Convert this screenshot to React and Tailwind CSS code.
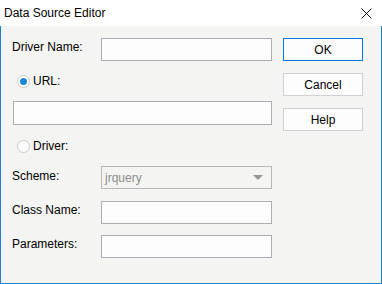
import React from 'react';

const font = { fontFamily: '"Liberation Sans", Arial, sans-serif' };

function Radio({ checked, label }) {
  return (
    <div className="flex items-center h-4 pl-[5px] gap-[3px]">
      <span className="w-[13px] h-[13px] rounded-full border border-[#c8c8c8] bg-white flex items-center justify-center">
        {checked && <span className="w-[7px] h-[7px] rounded-full bg-[#1a88d6]"></span>}
      </span>
      <span className="text-[12px] text-black">{label}</span>
    </div>
  );
}

function Field({ label, children, className = '', lift = 'mb-[6px]' }) {
  return (
    <div className={`flex items-center h-[23px] ${className}`}>
      <span className={`w-[89px] text-[12px] text-black ${lift}`}>{label}</span>
      {children}
    </div>
  );
}

const inputCls = 'w-[171px] h-[23px] border border-[#abadb3] bg-[#fcfdfc]';

function Button({ children, primary, className = '' }) {
  return (
    <button
      className={`w-[80px] h-[23px] text-[12px] text-black bg-[#fdfdfd] border ${
        primary ? 'border-[#0078d7]' : 'border-[#d0d0d0]'
      } ${className}`}
    >
      {children}
    </button>
  );
}

export default function App() {
  return (
    <div className="w-[382px] h-[284px] flex flex-col bg-white" style={font}>
      {/* Title bar */}
      <div className="h-[26px] flex items-center justify-between pl-[4px] pr-[10px] bg-white">
        <span className="text-[12px] text-black">Data Source Editor</span>
        <svg width="11" height="11" viewBox="0 0 11 11" className="mt-[1px]">
          <path d="M0.5 0.5 L10.5 10.5 M10.5 0.5 L0.5 10.5" stroke="#111" strokeWidth="1" />
        </svg>
      </div>

      {/* Body */}
      <div className="flex-1 flex bg-[#f4f4f2] border-x border-b border-[#1883d7] pt-[12px] pl-[11px]">
        <div className="flex flex-col w-[260px]">
          <Field label="Driver Name:">
            <div className={inputCls}></div>
          </Field>
          <div className="mt-[12px]">
            <Radio checked label="URL:" />
          </div>
          <div className="mt-[12px] ml-[1px] w-[259px] h-[24px] border border-[#abadb3] bg-[#fcfdfc]"></div>
          <div className="mt-[13px]">
            <Radio label="Driver:" />
          </div>
          <Field label="Scheme:" className="mt-[12px]" lift="mb-[3px]">
            <div className="w-[171px] h-[23px] border border-[#b8b8b8] bg-[#f4f4f2] flex items-center justify-between pl-[3px] pr-[8px]">
              <span className="text-[12px] text-[#8c8c8c]">jrquery</span>
              <svg width="10" height="6" viewBox="0 0 10 6">
                <path d="M0 0 H10 L5 5 Z" fill="#979797" />
              </svg>
            </div>
          </Field>
          <Field label="Class Name:" className="mt-[12px]">
            <div className={inputCls}></div>
          </Field>
          <Field label="Parameters:" className="mt-[11px]">
            <div className={inputCls}></div>
          </Field>
        </div>
        <div className="flex flex-col ml-[11px]">
          <Button primary>OK</Button>
          <Button className="mt-[12px]">Cancel</Button>
          <Button className="mt-[12px]">Help</Button>
        </div>
      </div>
    </div>
  );
}
